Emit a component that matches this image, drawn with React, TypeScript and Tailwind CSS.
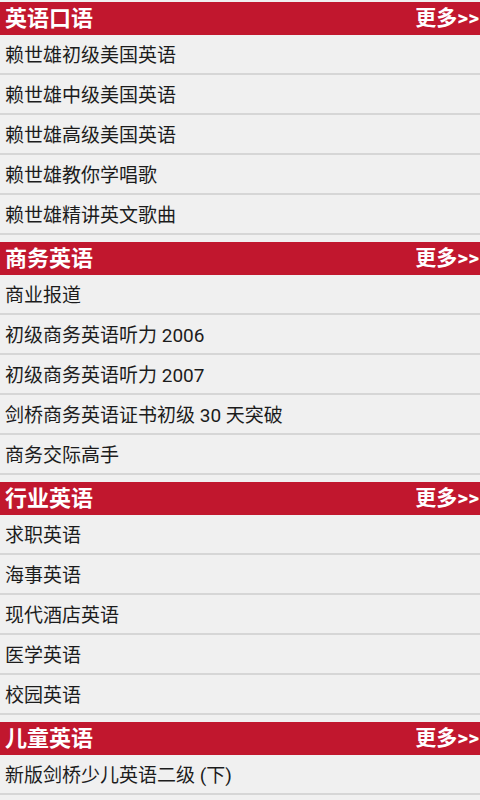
import React from "react";

const sections: { title: string; items: string[] }[] = [
  {
    title: "英语口语",
    items: ["赖世雄初级美国英语", "赖世雄中级美国英语", "赖世雄高级美国英语", "赖世雄教你学唱歌", "赖世雄精讲英文歌曲"],
  },
  {
    title: "商务英语",
    items: ["商业报道", "初级商务英语听力 2006", "初级商务英语听力 2007", "剑桥商务英语证书初级 30 天突破", "商务交际高手"],
  },
  {
    title: "行业英语",
    items: ["求职英语", "海事英语", "现代酒店英语", "医学英语", "校园英语"],
  },
  {
    title: "儿童英语",
    items: ["新版剑桥少儿英语二级 (下)"],
  },
];

export default function App() {
  return (
    <div
      className="w-[480px] h-[800px] overflow-hidden bg-[#f0f0f0] pt-[2px]"
      style={{ fontFamily: "Roboto, 'Noto Sans CJK SC', sans-serif" }}
    >
      {sections.map((s) => (
        <div key={s.title} className="mb-[7px]">
          <div className="h-[33px] bg-[#c1172e] flex items-center justify-between pl-[5px] pr-[1px]">
            <span className="text-white text-[22px] font-bold leading-none">{s.title}</span>
            <span className="text-white text-[21px] font-bold leading-none">更多&gt;&gt;</span>
          </div>
          {s.items.map((it) => (
            <div
              key={it}
              className="h-10 border-b-2 border-[#d6d6d6] flex items-center pl-[5px] pt-[2px] text-[19px] text-[#1c1c1c] leading-none"
            >
              {it}
            </div>
          ))}
        </div>
      ))}
    </div>
  );
}
